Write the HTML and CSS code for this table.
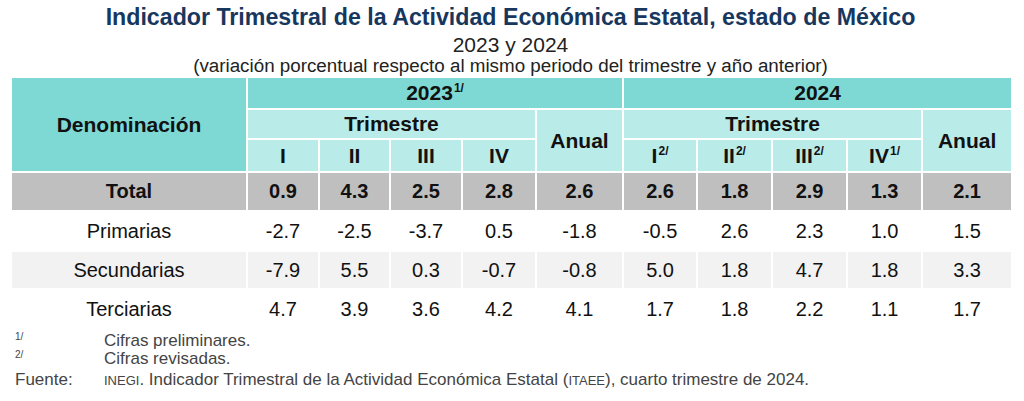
FILE: index.html
```html
<!DOCTYPE html>
<html lang="es">
<head>
<meta charset="utf-8">
<title>ITAEE estado de México</title>
<link rel="stylesheet" href="styles.css">
</head>
<body>
<div class="page">
  <header class="head">
    <h1 class="title">Indicador Trimestral de la Actividad Económica Estatal, estado de México</h1>
    <div class="years">2023 y 2024</div>
    <div class="note">(variación porcentual respecto al mismo periodo del trimestre y año anterior)</div>
  </header>
  <table class="data">
    <colgroup>
      <col class="c-name">
      <col class="c-q1"><col class="c-q2"><col class="c-q3"><col class="c-q4"><col class="c-an1">
      <col class="c-q5"><col class="c-q6"><col class="c-q7"><col class="c-q8"><col class="c-an2">
    </colgroup>
    <thead>
      <tr class="h1">
        <th rowspan="3" class="dark name-h">Denominación</th>
        <th colspan="5" class="dark">2023<sup>1/</sup></th>
        <th colspan="5" class="dark">2024</th>
      </tr>
      <tr class="h2">
        <th colspan="4" class="light">Trimestre</th>
        <th rowspan="2" class="light">Anual</th>
        <th colspan="4" class="light">Trimestre</th>
        <th rowspan="2" class="light">Anual</th>
      </tr>
      <tr class="h3">
        <th class="light">I</th>
        <th class="light">II</th>
        <th class="light">III</th>
        <th class="light">IV</th>
        <th class="light">I<sup>2/</sup></th>
        <th class="light">II<sup>2/</sup></th>
        <th class="light">III<sup>2/</sup></th>
        <th class="light">IV<sup>1/</sup></th>
      </tr>
    </thead>
    <tbody>
      <tr class="total">
        <td>Total</td><td>0.9</td><td>4.3</td><td>2.5</td><td>2.8</td><td>2.6</td><td>2.6</td><td>1.8</td><td>2.9</td><td>1.3</td><td>2.1</td>
      </tr>
      <tr class="row r-prim">
        <td>Primarias</td><td>-2.7</td><td>-2.5</td><td>-3.7</td><td>0.5</td><td>-1.8</td><td>-0.5</td><td>2.6</td><td>2.3</td><td>1.0</td><td>1.5</td>
      </tr>
      <tr class="row alt r-sec">
        <td>Secundarias</td><td>-7.9</td><td>5.5</td><td>0.3</td><td>-0.7</td><td>-0.8</td><td>5.0</td><td>1.8</td><td>4.7</td><td>1.8</td><td>3.3</td>
      </tr>
      <tr class="row r-ter">
        <td>Terciarias</td><td>4.7</td><td>3.9</td><td>3.6</td><td>4.2</td><td>4.1</td><td>1.7</td><td>1.8</td><td>2.2</td><td>1.1</td><td>1.7</td>
      </tr>
    </tbody>
  </table>
  <div class="notes">
    <div class="fn"><span class="mark"><sup>1/</sup></span><span>Cifras preliminares.</span></div>
    <div class="fn"><span class="mark"><sup>2/</sup></span><span>Cifras revisadas.</span></div>
    <div class="fn src"><span class="mark">Fuente:</span><span><span class="sc">INEGI</span>. Indicador Trimestral de la Actividad Económica Estatal (<span class="sc">ITAEE</span>), cuarto trimestre de 2024.</span></div>
  </div>
</div>
</body>
</html>
```
FILE: styles.css
```css
* { box-sizing: border-box; }
html, body { margin: 0; padding: 0; background: #fff; }
body { font-family: "Liberation Sans", Arial, sans-serif; color: #111; }
.page { width: 1024px; padding: 0 0 0 10px; }
.head { width: 1001px; text-align: center; }
.title {
  margin: 0;
  padding-top: 4px;
  font-size: 23.2px;
  line-height: 26px;
  font-weight: 700;
  color: #17375e;
}
.years { font-size: 21px; line-height: 22px; color: #222; margin-top: 4px; }
.note { font-size: 18.8px; line-height: 20px; color: #222; }
.data {
  border-collapse: collapse;
  table-layout: fixed;
  width: 1001px;
  margin-top: 0;
}
.c-name { width: 236px; }
.c-q1 { width: 72px; } .c-q2 { width: 71px; } .c-q3 { width: 72px; } .c-q4 { width: 74px; }
.c-an1 { width: 87px; }
.c-q5 { width: 74px; } .c-q6 { width: 75px; } .c-q7 { width: 75px; } .c-q8 { width: 75px; }
.c-an2 { width: 90px; }
.data th, .data td {
  border: 2px solid #fff;
  padding: 0;
  text-align: center;
  vertical-align: middle;
  font-size: 20px;
}
.data th { font-weight: 700; color: #111; font-size: 21px; }
.dark { background: #7ed9d5; }
.light { background: #b9ebe8; }
.h1 th { height: 32px; }
.h2 th { height: 30px; }
.h3 th { height: 33px; }
.data sup { font-size: 12px; vertical-align: 0; position: relative; top: -8px; margin-left: 1px; }
.total td { background: #bfbfbf; font-weight: 700; height: 39px; }
.row td { height: 40px; background: #fff; }
.row.alt td { background: #f2f2f2; height: 38px; }
.notes { margin-top: 2px; color: #444; font-size: 17px; }
.fn { display: flex; height: 18px; line-height: 18px; overflow: visible; }
.fn .mark { width: 94px; padding-left: 5px; flex: none; }
.fn.src { margin-top: 3px; }
.fn sup { font-size: 10px; line-height: 0; vertical-align: 0; position: relative; top: -6px; }
.sc { font-size: 13px; }
```
